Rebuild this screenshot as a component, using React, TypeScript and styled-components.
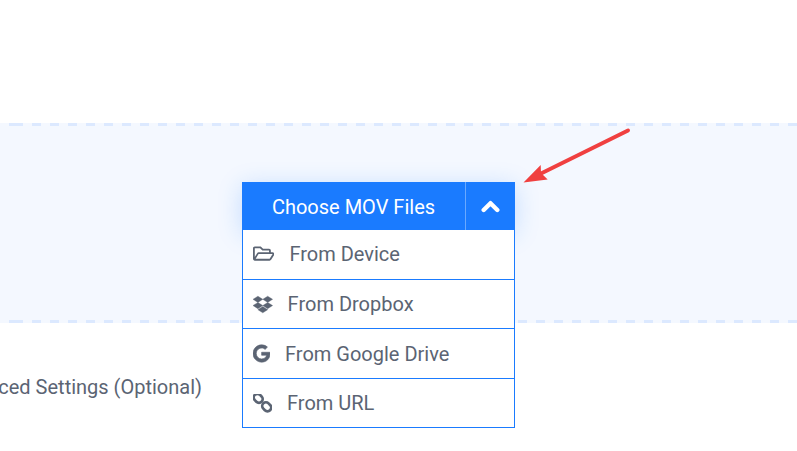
import React from 'react';
import styled, { createGlobalStyle } from 'styled-components';
import { FaDropbox, FaGoogle, FaRegFolderOpen } from 'react-icons/fa';

const GlobalStyle = createGlobalStyle`
  html, body {
    margin: 0;
    padding: 0;
    background: #fff;
    overflow: hidden;
  }
  body {
    font-family: Roboto, "Liberation Sans", sans-serif;
  }
`;

const Page = styled.div`
  position: relative;
  width: 797px;
  height: 451px;
  overflow: hidden;
  padding-top: 123px;
  box-sizing: border-box;
`;

const DropZone = styled.div`
  box-sizing: border-box;
  height: 200px;
  padding: 59px 40px 0 0;
  display: flex;
  justify-content: center;
  background-color: #f4f8ff;
  background-image: repeating-linear-gradient(90deg, #dce9ff 0 9px, transparent 9px 18px),
    repeating-linear-gradient(90deg, #dce9ff 0 9px, transparent 9px 18px);
  background-size: 100% 3px;
  background-position: 14px 0, 14px 100%;
  background-repeat: repeat-x;
`;

const ButtonWrap = styled.div`
  position: relative;
  width: 273px;
  height: 48px;
  display: flex;
  color: #fff;
  background: #1a7bff;
  box-shadow: 0 4px 24px rgba(26, 123, 255, 0.22);
`;

const MainButton = styled.div`
  flex: 1;
  display: flex;
  align-items: center;
  justify-content: center;
  padding-top: 1px;
  font-size: 20px;
  border-right: 1px solid #6aa9ff;
`;

const CaretButton = styled.div`
  width: 49px;
  display: flex;
  align-items: center;
  justify-content: center;
`;

const Menu = styled.div`
  position: absolute;
  top: 48px;
  left: 0;
  right: 0;
  box-sizing: border-box;
  background: #fff;
  border: 1px solid #1a7bff;
  border-top: 0;
`;

const MenuItem = styled.div<{ $height: number; $iconWidth: number }>`
  box-sizing: border-box;
  height: ${(p) => p.$height}px;
  display: flex;
  align-items: center;
  gap: 15px;
  padding-left: 10px;
  color: #5b6473;
  font-size: 20px;
  border-bottom: 1px solid #1a7bff;
  svg {
    width: ${(p) => p.$iconWidth}px;
    height: 19px;
    flex: none;
  }
  &:first-child {
    padding-bottom: 2px;
  }
  &:last-child {
    border-bottom: 0;
  }
`;

const BoldGoogle = styled(FaGoogle)`
  stroke: currentColor;
  stroke-width: 18px;
`;

const BoldDropbox = styled(FaDropbox)`
  stroke: currentColor;
  stroke-width: 10px;
`;

const Arrow = styled.svg`
  position: absolute;
  left: 500px;
  top: 110px;
`;

const SettingsRow = styled.div`
  width: 202px;
  margin-top: 52px;
  display: flex;
  justify-content: flex-end;
  white-space: nowrap;
  overflow: hidden;
  font-size: 20px;
  line-height: 24px;
  color: #5b6473;
`;

const ChainIcon = () => (
  <svg viewBox="0 0 19 19">
    <g fill="none" stroke="currentColor" strokeWidth="2.7">
      <rect x="0.4" y="0.6" width="9.6" height="7.4" rx="3.7" transform="rotate(45 5.2 4.3)" />
      <rect x="8.9" y="9.1" width="9.6" height="7.4" rx="3.7" transform="rotate(45 13.7 12.8)" />
    </g>
  </svg>
);

const items = [
  { label: 'From Device', icon: <FaRegFolderOpen />, height: 50, iconWidth: 21.4 },
  { label: 'From Dropbox', icon: <BoldDropbox />, height: 49, iconWidth: 19.6 },
  { label: 'From Google Drive', icon: <BoldGoogle />, height: 50, iconWidth: 17 },
  { label: 'From URL', icon: <ChainIcon />, height: 48, iconWidth: 19 },
];

export default function App() {
  return (
    <Page>
      <GlobalStyle />
      <DropZone>
        <ButtonWrap>
          <MainButton>Choose MOV Files</MainButton>
          <CaretButton>
            <svg width="19" height="13" viewBox="0 0 19 13">
              <polyline
                points="2.7,10 9.5,3.2 16.3,10"
                fill="none"
                stroke="#fff"
                strokeWidth="4.4"
                strokeLinecap="round"
                strokeLinejoin="round"
              />
            </svg>
          </CaretButton>
          <Menu>
            {items.map((item) => (
              <MenuItem key={item.label} $height={item.height} $iconWidth={item.iconWidth}>
                {item.icon}
                {item.label}
              </MenuItem>
            ))}
          </Menu>
        </ButtonWrap>
      </DropZone>
      <SettingsRow>Advanced Settings (Optional)</SettingsRow>
      <Arrow width="150" height="90" viewBox="0 0 150 90">
        <line x1="128" y1="20.5" x2="40" y2="64" stroke="#f04040" strokeWidth="4" strokeLinecap="round" />
        <polygon points="23.5,72.5 40.7,55 41,63 47.7,69.5" fill="#f04040" />
      </Arrow>
    </Page>
  );
}
